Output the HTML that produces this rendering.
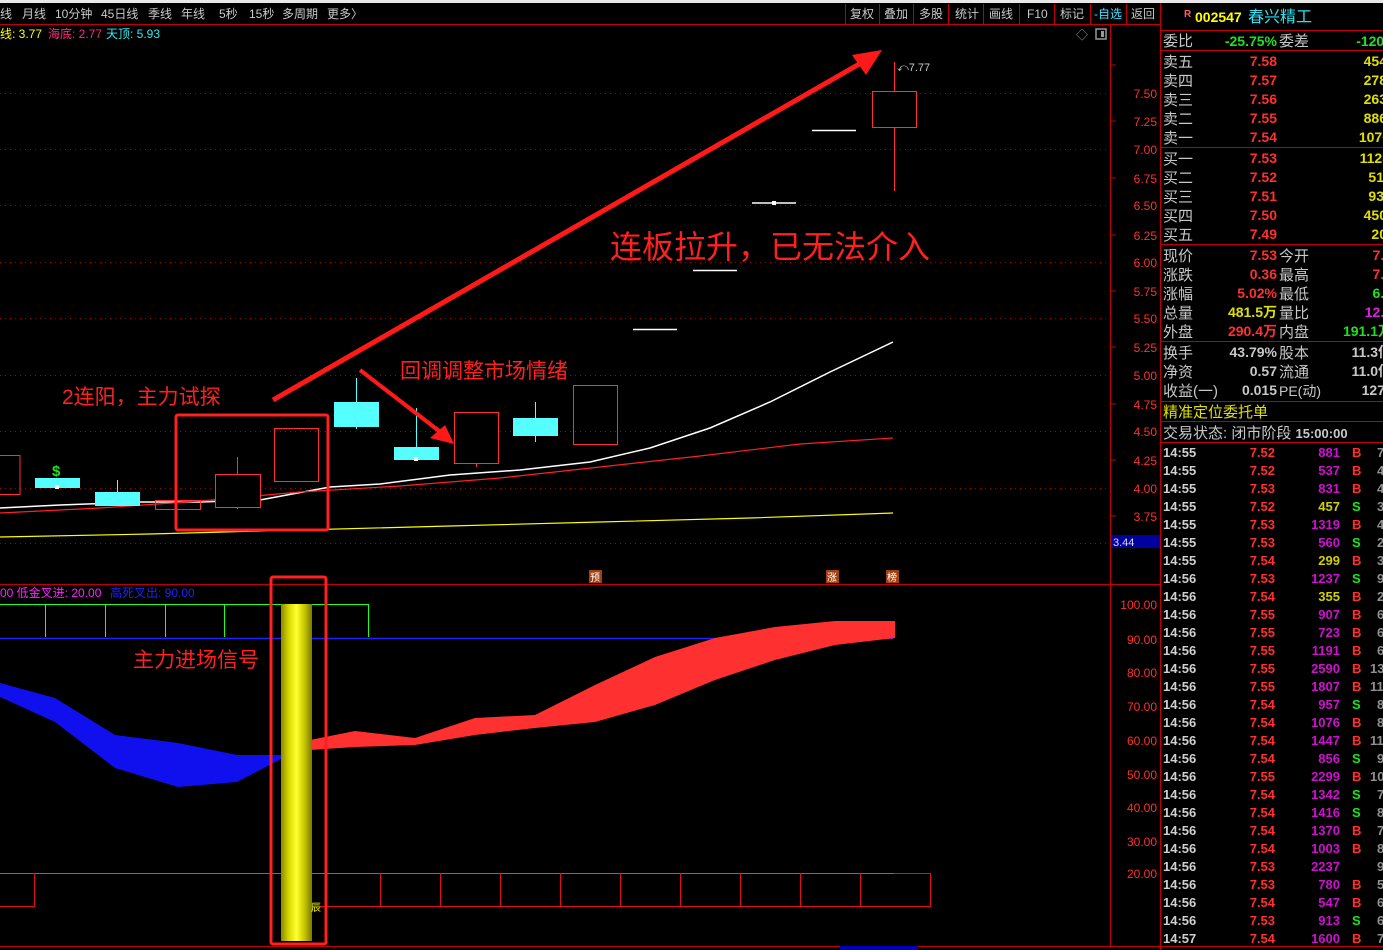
<!DOCTYPE html>
<html><head><meta charset="utf-8"><style>
html,body{margin:0;padding:0;background:#000;width:1383px;height:950px;overflow:hidden}
svg{display:block;font-family:"Liberation Sans","Noto Sans CJK SC",sans-serif}
</style></head><body>
<svg width="1383" height="950" viewBox="0 0 1383 950" xmlns="http://www.w3.org/2000/svg">
<defs>
<linearGradient id="yb" x1="0" x2="1" y1="0" y2="0">
<stop offset="0" stop-color="#8a8a00"/><stop offset="0.25" stop-color="#d8d800"/><stop offset="0.5" stop-color="#ffff30"/><stop offset="0.75" stop-color="#c8c800"/><stop offset="1" stop-color="#7a7a00"/>
</linearGradient>
</defs>
<rect width="1383" height="950" fill="#000"/>
<rect x="0" y="0" width="1383" height="3" fill="#e8e8e8"/>
<g font-size="12" fill="#c8c8c8">
<text x="0" y="18">线</text><text x="22" y="18">月线</text><text x="55" y="18">10分钟</text><text x="101" y="18">45日线</text><text x="148" y="18">季线</text><text x="181" y="18">年线</text><text x="219" y="18">5秒</text><text x="249" y="18">15秒</text><text x="282" y="18">多周期</text><text x="327" y="18">更多〉</text>
<text x="850" y="18">复权</text><text x="884" y="18">叠加</text><text x="919" y="18">多股</text><text x="955" y="18">统计</text><text x="989" y="18">画线</text><text x="1027" y="18">F10</text><text x="1060" y="18">标记</text><text x="1094" y="18" fill="#40e0ff">-自选</text><text x="1131" y="18">返回</text>
</g>
<g stroke="#c00000" stroke-width="1">
<line x1="845.5" y1="4" x2="845.5" y2="24"/><line x1="879.5" y1="4" x2="879.5" y2="24"/><line x1="913.5" y1="4" x2="913.5" y2="24"/><line x1="948.5" y1="4" x2="948.5" y2="24"/><line x1="983.5" y1="4" x2="983.5" y2="24"/><line x1="1019.5" y1="4" x2="1019.5" y2="24"/><line x1="1054.5" y1="4" x2="1054.5" y2="24"/><line x1="1090.5" y1="4" x2="1090.5" y2="24"/><line x1="1126.5" y1="4" x2="1126.5" y2="24"/>
<line x1="0" y1="24.5" x2="1160" y2="24.5"/>
<line x1="1110.5" y1="24" x2="1110.5" y2="946"/>
<line x1="1160.5" y1="3" x2="1160.5" y2="950"/>
<line x1="0" y1="584.5" x2="1160" y2="584.5"/>
<line x1="0" y1="946.5" x2="1383" y2="946.5"/>
</g>
<g font-size="12">
<text x="0" y="38" fill="#ffff00">线: 3.77</text><text x="48" y="38" fill="#ff2a80">海底: 2.77</text><text x="106" y="38" fill="#30e8f0">天顶: 5.93</text>
</g>
<text x="1076" y="39" font-size="12" fill="#999">◇</text>
<rect x="1096" y="29" width="10" height="10" fill="none" stroke="#999" stroke-width="1.5"/><rect x="1101" y="31" width="3" height="6" fill="#999"/>
<g stroke="#a00000" stroke-dasharray="1 4" stroke-width="1">
<line x1="0" y1="93.5" x2="1110" y2="93.5"/><line x1="0" y1="149.5" x2="1110" y2="149.5"/><line x1="0" y1="205.5" x2="1110" y2="205.5"/><line x1="0" y1="262.5" x2="1110" y2="262.5"/><line x1="0" y1="318.5" x2="1110" y2="318.5"/><line x1="0" y1="375.5" x2="1110" y2="375.5"/><line x1="0" y1="431.5" x2="1110" y2="431.5"/><line x1="0" y1="488.5" x2="1110" y2="488.5"/><line x1="0" y1="543.5" x2="1110" y2="543.5"/>
</g>
<g font-size="12" fill="#ff3030" text-anchor="end">
<text x="1157" y="98">7.50</text><text x="1157" y="126">7.25</text><text x="1157" y="154">7.00</text><text x="1157" y="183">6.75</text><text x="1157" y="210">6.50</text><text x="1157" y="240">6.25</text><text x="1157" y="267">6.00</text><text x="1157" y="296">5.75</text><text x="1157" y="323">5.50</text><text x="1157" y="352">5.25</text><text x="1157" y="380">5.00</text><text x="1157" y="409">4.75</text><text x="1157" y="436">4.50</text><text x="1157" y="465">4.25</text><text x="1157" y="493">4.00</text><text x="1157" y="521">3.75</text>
<text x="1157" y="609">100.00</text><text x="1157" y="644">90.00</text><text x="1157" y="677">80.00</text><text x="1157" y="711">70.00</text><text x="1157" y="745">60.00</text><text x="1157" y="779">50.00</text><text x="1157" y="812">40.00</text><text x="1157" y="846">30.00</text><text x="1157" y="878">20.00</text>
</g>
<g stroke="#c00000"><line x1="1111" y1="65" x2="1116" y2="65"/><line x1="1111" y1="121" x2="1116" y2="121"/><line x1="1111" y1="178" x2="1116" y2="178"/><line x1="1111" y1="235" x2="1116" y2="235"/><line x1="1111" y1="291" x2="1116" y2="291"/><line x1="1111" y1="347" x2="1116" y2="347"/><line x1="1111" y1="404" x2="1116" y2="404"/><line x1="1111" y1="460" x2="1116" y2="460"/><line x1="1111" y1="516" x2="1116" y2="516"/></g>
<rect x="1111" y="535" width="49" height="13" fill="#0000a0"/><text x="1113" y="546" font-size="11" fill="#ddd">3.44</text>
<polyline fill="none" stroke="#fff" stroke-width="1.5" points="0,508 60,505 140,502 200,502 260,500 330,487 380,484 450,475 520,470 590,462 650,448 710,428 770,402 830,372 893,342"/>
<polyline fill="none" stroke="#ff2020" stroke-width="1.2" points="0,513 100,508 200,501 300,492 400,486 500,478 600,467 700,456 800,444 893,438"/>
<polyline fill="none" stroke="#ffff00" stroke-width="1.2" points="0,537 150,534 300,530 450,526 600,522 750,518 893,513"/>
<g fill="none" stroke="#ff3030" stroke-width="1">
<rect x="-1" y="455.5" width="21" height="39"/>
<rect x="155.5" y="500.5" width="45" height="9"/>
<line x1="237.5" y1="457" x2="237.5" y2="509"/><rect x="215.5" y="474.5" width="45" height="33" fill="#000"/>
<rect x="274.5" y="428.5" width="44" height="53"/>
<line x1="476.5" y1="412" x2="476.5" y2="467"/><rect x="454.5" y="412.5" width="44" height="51" fill="#000"/>
<rect x="573.5" y="385.5" width="44" height="59"/>
<line x1="894.5" y1="62" x2="894.5" y2="191"/><rect x="872.5" y="91.5" width="44" height="36" fill="#000"/>
</g>
<g stroke="#55ffff" stroke-width="1"><line x1="117.5" y1="480" x2="117.5" y2="506"/><line x1="356.5" y1="378" x2="356.5" y2="429"/><line x1="416.5" y1="408" x2="416.5" y2="460"/><line x1="535.5" y1="402" x2="535.5" y2="442"/></g>
<g fill="#55ffff"><rect x="35" y="478" width="45" height="10"/><rect x="95" y="492" width="45" height="14"/><rect x="334" y="402" width="45" height="25"/><rect x="394" y="447" width="45" height="13"/><rect x="513" y="418" width="45" height="18"/></g>
<rect x="55" y="485" width="4" height="4" fill="#fff"/><rect x="414" y="457" width="4" height="4" fill="#fff"/>
<text x="52" y="476" font-size="15" fill="#20e020" font-weight="bold">$</text>
<g stroke="#fff" stroke-width="1.5"><line x1="633" y1="329.5" x2="677" y2="329.5"/><line x1="693" y1="270.5" x2="737" y2="270.5"/><line x1="752" y1="203" x2="796" y2="203"/><line x1="812" y1="130.5" x2="856" y2="130.5"/></g>
<rect x="772" y="201" width="4" height="4" fill="#fff"/>
<text x="897" y="71" font-size="11" fill="#ccc">⤺7.77</text>
<line x1="273" y1="400" x2="868" y2="59" stroke="#ff1a1a" stroke-width="5"/>
<polygon points="882,50 852,55 866,75" fill="#ff1a1a"/>
<line x1="360" y1="370" x2="443" y2="434" stroke="#ff1a1a" stroke-width="4"/>
<polygon points="454,444 430,438 445,425" fill="#ff1a1a"/>
<rect x="176" y="415" width="152" height="115" fill="none" stroke="#ff2020" stroke-width="3" rx="2"/>
<text x="610" y="258" font-size="32" fill="#ff2020">连板拉升，已无法介入</text>
<text x="400" y="378" font-size="21" fill="#ff2020">回调调整市场情绪</text>
<text x="62" y="404" font-size="21" fill="#ff2020">2连阳，主力试探</text>
<g font-size="10" fill="#fff"><rect x="589" y="570" width="13" height="13" fill="#a04010"/><text x="590" y="581">预</text><rect x="826" y="570" width="13" height="13" fill="#a04010"/><text x="827" y="581">涨</text><rect x="886" y="570" width="13" height="13" fill="#a04010"/><text x="887" y="581">榜</text></g>
<text x="0" y="597" font-size="12" fill="#ff20ff">00 低金叉进: 20.00</text><text x="110" y="597" font-size="12" fill="#2020ff">高死叉出: 90.00</text>
<g fill="none" stroke="#20ff20" stroke-width="1"><polyline points="0,604.5 368.5,604.5 368.5,637"/><line x1="45.5" y1="604" x2="45.5" y2="637"/><line x1="105.5" y1="604" x2="105.5" y2="637"/><line x1="165.5" y1="604" x2="165.5" y2="637"/><line x1="224.5" y1="604" x2="224.5" y2="637"/></g>
<line x1="0" y1="638.5" x2="893" y2="638.5" stroke="#2020ff" stroke-width="1.5"/>
<polygon fill="#1010ee" points="0,683 55,698 115,735 178,743 237,755 283,755 283,758 237,782 178,787 115,768 55,722 0,697"/>
<polygon fill="#ff3030" points="310,740 355,731 415,738 475,718 535,715 595,685 655,657 715,638 775,627 835,621 895,621 895,638 835,645 775,660 715,680 655,705 595,722 535,728 475,735 415,745 355,747 310,750"/>
<line x1="0" y1="873.5" x2="894" y2="873.5" stroke="#e020e0"/>
<g fill="none" stroke="#e01010"><polyline points="0,906.5 34.5,906.5 34.5,873"/><polyline points="320,906.5 930.5,906.5 930.5,873.5 894,873.5"/>
<line x1="380.5" y1="873" x2="380.5" y2="906"/><line x1="440.5" y1="873" x2="440.5" y2="906"/><line x1="500.5" y1="873" x2="500.5" y2="906"/><line x1="560.5" y1="873" x2="560.5" y2="906"/><line x1="620.5" y1="873" x2="620.5" y2="906"/><line x1="680.5" y1="873" x2="680.5" y2="906"/><line x1="740.5" y1="873" x2="740.5" y2="906"/><line x1="800.5" y1="873" x2="800.5" y2="906"/><line x1="860.5" y1="873" x2="860.5" y2="906"/></g>
<rect x="281" y="604" width="31" height="337" fill="url(#yb)"/>
<text x="311" y="911" font-size="10" fill="#ffff00">辰</text>
<rect x="271" y="577" width="55" height="367" fill="none" stroke="#ff2020" stroke-width="3" rx="2"/>
<text x="133" y="667" font-size="21" fill="#ff2020">主力进场信号</text>
<rect x="840" y="946" width="78" height="4" fill="#0000b0"/>
<text x="1184" y="17" font-size="10" fill="#ff6060" font-weight="bold">R</text>
<text x="1195" y="22" font-size="14" fill="#ffff00" font-weight="bold">002547</text>
<text x="1248" y="22" font-size="16" fill="#30e0f0">春兴精工</text>
<g stroke="#c00000"><line x1="1160" y1="30.5" x2="1383" y2="30.5"/><line x1="1160" y1="50.5" x2="1383" y2="50.5"/><line x1="1160" y1="147.5" x2="1383" y2="147.5"/><line x1="1160" y1="244.5" x2="1383" y2="244.5"/><line x1="1160" y1="341.5" x2="1383" y2="341.5"/><line x1="1160" y1="401.5" x2="1383" y2="401.5"/><line x1="1160" y1="421.5" x2="1383" y2="421.5"/><line x1="1160" y1="442.5" x2="1383" y2="442.5"/></g>
<g font-size="15" fill="#c8c8c8">
<text x="1163" y="46">委比</text><text x="1279" y="46">委差</text>
<text x="1163" y="67">卖五</text><text x="1163" y="86">卖四</text><text x="1163" y="105">卖三</text><text x="1163" y="124">卖二</text><text x="1163" y="143">卖一</text>
<text x="1163" y="164">买一</text><text x="1163" y="183">买二</text><text x="1163" y="202">买三</text><text x="1163" y="221">买四</text><text x="1163" y="240">买五</text>
<text x="1163" y="261">现价</text><text x="1279" y="261">今开</text><text x="1163" y="280">涨跌</text><text x="1279" y="280">最高</text><text x="1163" y="299">涨幅</text><text x="1279" y="299">最低</text><text x="1163" y="318">总量</text><text x="1279" y="318">量比</text><text x="1163" y="337">外盘</text><text x="1279" y="337">内盘</text>
<text x="1163" y="358">换手</text><text x="1279" y="358">股本</text><text x="1163" y="377">净资</text><text x="1279" y="377">流通</text><text x="1163" y="396">收益(一)</text><text x="1279" y="396" font-size="14">PE(动)</text>
<text x="1163" y="417" fill="#e0e000">精准定位委托单</text>
<text x="1163" y="438">交易状态: 闭市阶段 <tspan font-size="13" font-weight="bold">15:00:00</tspan></text>
</g>
<g font-size="14" font-weight="bold" text-anchor="end">
<text x="1277" y="46" fill="#20e020">-25.75%</text><text x="1392" y="46" fill="#20e020">-1209</text>
<g fill="#ff3030"><text x="1277" y="66">7.58</text><text x="1277" y="85">7.57</text><text x="1277" y="104">7.56</text><text x="1277" y="123">7.55</text><text x="1277" y="142">7.54</text><text x="1277" y="163">7.53</text><text x="1277" y="182">7.52</text><text x="1277" y="201">7.51</text><text x="1277" y="220">7.50</text><text x="1277" y="239">7.49</text></g>
<g fill="#e0e000"><text x="1387" y="66">454</text><text x="1387" y="85">278</text><text x="1387" y="104">263</text><text x="1387" y="123">886</text><text x="1390" y="142">1070</text><text x="1390" y="163">1128</text><text x="1384" y="182">51</text><text x="1384" y="201">93</text><text x="1387" y="220">450</text><text x="1387" y="239">20</text></g>
<text x="1277" y="260" fill="#ff3030">7.53</text><text x="1392" y="260" fill="#ff3030">7.2</text>
<text x="1277" y="279" fill="#ff3030">0.36</text><text x="1392" y="279" fill="#ff3030">7.7</text>
<text x="1277" y="298" fill="#ff3030">5.02%</text><text x="1392" y="298" fill="#20e020">6.6</text>
<text x="1277" y="317" fill="#e0e000">481.5万</text><text x="1392" y="317" fill="#e020e0">12.3</text>
<text x="1277" y="336" fill="#ff3030">290.4万</text><text x="1392" y="336" fill="#20e020">191.1万</text>
<text x="1277" y="357" fill="#c8c8c8">43.79%</text><text x="1392" y="357" fill="#c8c8c8">11.3亿</text>
<text x="1277" y="376" fill="#c8c8c8">0.57</text><text x="1392" y="376" fill="#c8c8c8">11.0亿</text>
<text x="1277" y="395" fill="#c8c8c8">0.015</text><text x="1385" y="395" fill="#c8c8c8">127</text>
</g>
<g font-size="13" font-weight="bold">
<g fill="#d0d0d0">
<text x="1163" y="457">14:55</text><text x="1163" y="475">14:55</text><text x="1163" y="493">14:55</text><text x="1163" y="511">14:55</text><text x="1163" y="529">14:55</text><text x="1163" y="547">14:55</text><text x="1163" y="565">14:55</text><text x="1163" y="583">14:56</text><text x="1163" y="601">14:56</text><text x="1163" y="619">14:56</text><text x="1163" y="637">14:56</text><text x="1163" y="655">14:56</text><text x="1163" y="673">14:56</text><text x="1163" y="691">14:56</text><text x="1163" y="709">14:56</text><text x="1163" y="727">14:56</text><text x="1163" y="745">14:56</text><text x="1163" y="763">14:56</text><text x="1163" y="781">14:56</text><text x="1163" y="799">14:56</text><text x="1163" y="817">14:56</text><text x="1163" y="835">14:56</text><text x="1163" y="853">14:56</text><text x="1163" y="871">14:56</text><text x="1163" y="889">14:56</text><text x="1163" y="907">14:56</text><text x="1163" y="925">14:56</text><text x="1163" y="943">14:57</text>
</g>
<g fill="#ff3030" text-anchor="end">
<text x="1275" y="457">7.52</text><text x="1275" y="475">7.52</text><text x="1275" y="493">7.53</text><text x="1275" y="511">7.52</text><text x="1275" y="529">7.53</text><text x="1275" y="547">7.53</text><text x="1275" y="565">7.54</text><text x="1275" y="583">7.53</text><text x="1275" y="601">7.54</text><text x="1275" y="619">7.55</text><text x="1275" y="637">7.55</text><text x="1275" y="655">7.55</text><text x="1275" y="673">7.55</text><text x="1275" y="691">7.55</text><text x="1275" y="709">7.54</text><text x="1275" y="727">7.54</text><text x="1275" y="745">7.54</text><text x="1275" y="763">7.54</text><text x="1275" y="781">7.55</text><text x="1275" y="799">7.54</text><text x="1275" y="817">7.54</text><text x="1275" y="835">7.54</text><text x="1275" y="853">7.54</text><text x="1275" y="871">7.53</text><text x="1275" y="889">7.53</text><text x="1275" y="907">7.54</text><text x="1275" y="925">7.53</text><text x="1275" y="943">7.54</text>
</g>
<g fill="#d010d0" text-anchor="end">
<text x="1340" y="457">881</text><text x="1340" y="475">537</text><text x="1340" y="493">831</text><text x="1340" y="511" fill="#d0d000">457</text><text x="1340" y="529">1319</text><text x="1340" y="547">560</text><text x="1340" y="565" fill="#d0d000">299</text><text x="1340" y="583">1237</text><text x="1340" y="601" fill="#d0d000">355</text><text x="1340" y="619">907</text><text x="1340" y="637">723</text><text x="1340" y="655">1191</text><text x="1340" y="673">2590</text><text x="1340" y="691">1807</text><text x="1340" y="709">957</text><text x="1340" y="727">1076</text><text x="1340" y="745">1447</text><text x="1340" y="763">856</text><text x="1340" y="781">2299</text><text x="1340" y="799">1342</text><text x="1340" y="817">1416</text><text x="1340" y="835">1370</text><text x="1340" y="853">1003</text><text x="1340" y="871">2237</text><text x="1340" y="889">780</text><text x="1340" y="907">547</text><text x="1340" y="925">913</text><text x="1340" y="943">1600</text>
</g>
<g fill="#ff3030">
<text x="1352" y="457">B</text><text x="1352" y="475">B</text><text x="1352" y="493">B</text><text x="1352" y="511" fill="#20e020">S</text><text x="1352" y="529">B</text><text x="1352" y="547" fill="#20e020">S</text><text x="1352" y="565">B</text><text x="1352" y="583" fill="#20e020">S</text><text x="1352" y="601">B</text><text x="1352" y="619">B</text><text x="1352" y="637">B</text><text x="1352" y="655">B</text><text x="1352" y="673">B</text><text x="1352" y="691">B</text><text x="1352" y="709" fill="#20e020">S</text><text x="1352" y="727">B</text><text x="1352" y="745">B</text><text x="1352" y="763" fill="#20e020">S</text><text x="1352" y="781">B</text><text x="1352" y="799" fill="#20e020">S</text><text x="1352" y="817" fill="#20e020">S</text><text x="1352" y="835">B</text><text x="1352" y="853">B</text><text x="1352" y="889">B</text><text x="1352" y="907">B</text><text x="1352" y="925" fill="#20e020">S</text><text x="1352" y="943">B</text>
</g>
<g fill="#909090">
<text x="1377" y="457">7</text><text x="1377" y="475">4</text><text x="1377" y="493">4</text><text x="1377" y="511">3</text><text x="1377" y="529">4</text><text x="1377" y="547">2</text><text x="1377" y="565">3</text><text x="1377" y="583">9</text><text x="1377" y="601">2</text><text x="1377" y="619">6</text><text x="1377" y="637">6</text><text x="1377" y="655">6</text><text x="1370" y="673">13</text><text x="1370" y="691">11</text><text x="1377" y="709">8</text><text x="1377" y="727">8</text><text x="1370" y="745">11</text><text x="1377" y="763">9</text><text x="1370" y="781">10</text><text x="1377" y="799">7</text><text x="1377" y="817">8</text><text x="1377" y="835">7</text><text x="1377" y="853">8</text><text x="1377" y="871">9</text><text x="1377" y="889">5</text><text x="1377" y="907">6</text><text x="1377" y="925">6</text><text x="1377" y="943">7</text>
</g>
</g>
</svg>
</body></html>
